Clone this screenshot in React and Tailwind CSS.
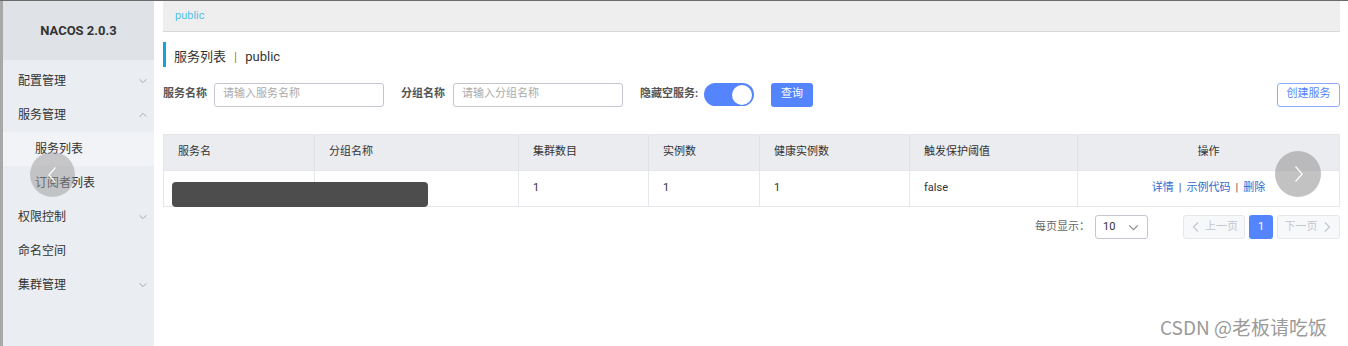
import React from 'react';

const menu = [
  { label: '配置管理', arrow: 'down' },
  { label: '服务管理', arrow: 'up' },
  { label: '服务列表', sub: true, active: true },
  { label: '订阅者列表', sub: true },
  { label: '权限控制', arrow: 'down' },
  { label: '命名空间' },
  { label: '集群管理', arrow: 'down' },
];

const cols = [
  { title: '服务名', w: 'w-[151px]' },
  { title: '分组名称', w: 'w-[204px]' },
  { title: '集群数目', w: 'w-[130px]', val: '1' },
  { title: '实例数', w: 'w-[111px]', val: '1' },
  { title: '健康实例数', w: 'w-[150px]', val: '1' },
  { title: '触发保护阈值', w: 'w-[168px]', val: 'false' },
];

const Chevron = ({ dir = 'down', size = 10, className = '' }) => (
  <svg viewBox="0 0 12 12" width={size} height={size} className={className} fill="none" stroke="currentColor" strokeWidth="1">
    {dir === 'down' ? <path d="M2 4l4 4 4-4" /> : <path d="M2 8l4-4 4 4" />}
  </svg>
);

const font = { fontFamily: "Roboto, 'Noto Sans CJK SC', sans-serif" };

export default function App() {
  return (
    <div style={font} className="relative w-[1348px] h-[346px] overflow-hidden bg-white text-[#333] border-t border-[#6b6b6b]">
      <div className="flex h-full">
        {/* left edge strip */}
        <div className="w-[3px] h-full bg-[#a8a8a8]" />

        {/* sidebar */}
        <div className="w-[151px] h-full bg-[#eaedf1] flex flex-col">
          <div className="h-[59px] bg-[#dfe2e7] flex items-center justify-center text-[13px] font-bold text-[#333]">
            NACOS 2.0.3
          </div>
          <div className="flex flex-col pt-[4px]">
            {menu.map((m) => (
              <div
                key={m.label}
                className={`h-[34px] flex items-center justify-between text-[12px] text-[#333] pr-[6px] ${m.sub ? 'pl-[32px]' : 'pl-[15px]'} ${m.active ? 'bg-[#f2f3f7]' : ''}`}
              >
                <span>{m.label}</span>
                {m.arrow && <Chevron dir={m.arrow} className="text-[#999]" />}
              </div>
            ))}
          </div>
        </div>

        {/* main */}
        <div className="flex-1 pl-[9px] pr-[8px] flex flex-col">
          <div className="h-[31px] bg-[#eeeeee] border-b border-[#d9d9d9] flex items-center pl-[12px] text-[11px] text-[#4ec3e6]">
            public
          </div>

          <div className="mt-[10px] h-[25px] border-l-[3px] border-[#1aa0d8] flex items-end pb-[1px] pl-[8px] text-[13px] text-[#333]">
            <span>服务列表</span>
            <span className="mx-[8px] text-[#c27c2c]">|</span>
            <span>public</span>
          </div>

          <div className="mt-[15px] flex items-center h-[25px] text-[11px]">
            <span className="font-bold text-[#555] w-[51px]">服务名称</span>
            <div className="w-[170px] h-[24px] border border-[#c4c6cf] rounded-[3px] flex items-center px-[8px] text-[#aaa]">请输入服务名称</div>
            <span className="font-bold text-[#555] ml-[17px] w-[52px]">分组名称</span>
            <div className="w-[170px] h-[24px] border border-[#c4c6cf] rounded-[3px] flex items-center px-[8px] text-[#aaa]">请输入分组名称</div>
            <span className="font-bold text-[#555] ml-[17px] w-[64px]">隐藏空服务:</span>
            <div className="w-[50px] h-[23px] rounded-full bg-[#5584ff] flex items-center justify-end pr-[2px]">
              <div className="w-[20px] h-[20px] rounded-full bg-white" />
            </div>
            <div className="ml-[17px] w-[42px] h-[24px] rounded-[3px] bg-[#5584ff] text-white flex items-center justify-center">查询</div>
            <div className="flex-1" />
            <div className="w-[63px] h-[24px] rounded-[3px] border border-[#8eacff] text-[#5584ff] flex items-center justify-center">创建服务</div>
          </div>

          {/* table */}
          <div className="mt-[27px] border border-[#e6e7eb] text-[11px]">
            <div className="flex h-[36px] bg-[#ebecf0] border-b border-[#e6e7eb]">
              {cols.map((c) => (
                <div key={c.title} className={`${c.w} border-r border-[#e1e2e6] flex items-center pl-[14px] text-[#333]`}>{c.title}</div>
              ))}
              <div className="flex-1 flex items-center justify-center text-[#333]">操作</div>
            </div>
            <div className="flex h-[35px] bg-white">
              {cols.map((c) => (
                <div key={c.title} className={`${c.w} border-r border-[#e6e7eb] flex items-center pl-[14px] text-[#333]`}>{c.val || ''}</div>
              ))}
              <div className="flex-1 flex items-center justify-center text-[#2f6ccf] gap-[5px]">
                <span>详情</span><span className="text-[#555]">|</span><span>示例代码</span><span className="text-[#555]">|</span><span>删除</span>
              </div>
            </div>
          </div>

          {/* pagination */}
          <div className="mt-[8px] flex items-center justify-end h-[24px] text-[11px]">
            <span className="text-[#666] mr-[5px]">每页显示：</span>
            <div className="w-[53px] h-[24px] border border-[#c4c6cf] rounded-[3px] flex items-center justify-between px-[7px] text-[#333]">
              <span>10</span>
              <Chevron dir="down" size={13} className="text-[#888]" />
            </div>
            <div className="ml-[35px] w-[62px] h-[24px] border border-[#e6e7eb] bg-[#f7f8fa] rounded-[3px] flex items-center justify-center gap-[3px] text-[#c4c6cf]">
              <svg viewBox="0 0 12 12" width="12" height="12" fill="none" stroke="currentColor" strokeWidth="1.2"><path d="M8 1.5L3.5 6 8 10.5" /></svg>
              <span>上一页</span>
            </div>
            <div className="ml-[4px] w-[24px] h-[24px] rounded-[3px] bg-[#5584ff] text-white flex items-center justify-center">1</div>
            <div className="ml-[4px] w-[63px] h-[24px] border border-[#e6e7eb] bg-[#f7f8fa] rounded-[3px] flex items-center justify-center gap-[3px] text-[#c4c6cf]">
              <span>下一页</span>
              <svg viewBox="0 0 12 12" width="12" height="12" fill="none" stroke="currentColor" strokeWidth="1.2"><path d="M4 1.5L8.5 6 4 10.5" /></svg>
            </div>
          </div>
        </div>
      </div>

      {/* redaction block */}
      <div className="absolute left-[172px] top-[181px] w-[256px] h-[25px] rounded-[4px] bg-[#4d4d4d]" />

      {/* carousel arrows */}
      <div className="absolute left-[30px] top-[151px] w-[45px] h-[45px] rounded-full bg-[#9a9a9a]/50 flex items-center justify-center">
        <svg viewBox="0 0 24 24" width="20" height="20" fill="none" stroke="white" strokeWidth="1.4"><path d="M15 3l-8 9 8 9" /></svg>
      </div>
      <div className="absolute left-[1275px] top-[150px] w-[46px] h-[46px] rounded-full bg-[#9a9a9a]/60 flex items-center justify-center">
        <svg viewBox="0 0 24 24" width="20" height="20" fill="none" stroke="white" strokeWidth="1.4"><path d="M9 3l8 9-8 9" /></svg>
      </div>

      {/* watermark */}
      <div className="absolute left-[1160px] top-[312px] text-[19px] text-[#9a9a9a]" style={{ fontFamily: "'Noto Sans CJK SC', sans-serif" }}>
        CSDN @老板请吃饭
      </div>
    </div>
  );
}
